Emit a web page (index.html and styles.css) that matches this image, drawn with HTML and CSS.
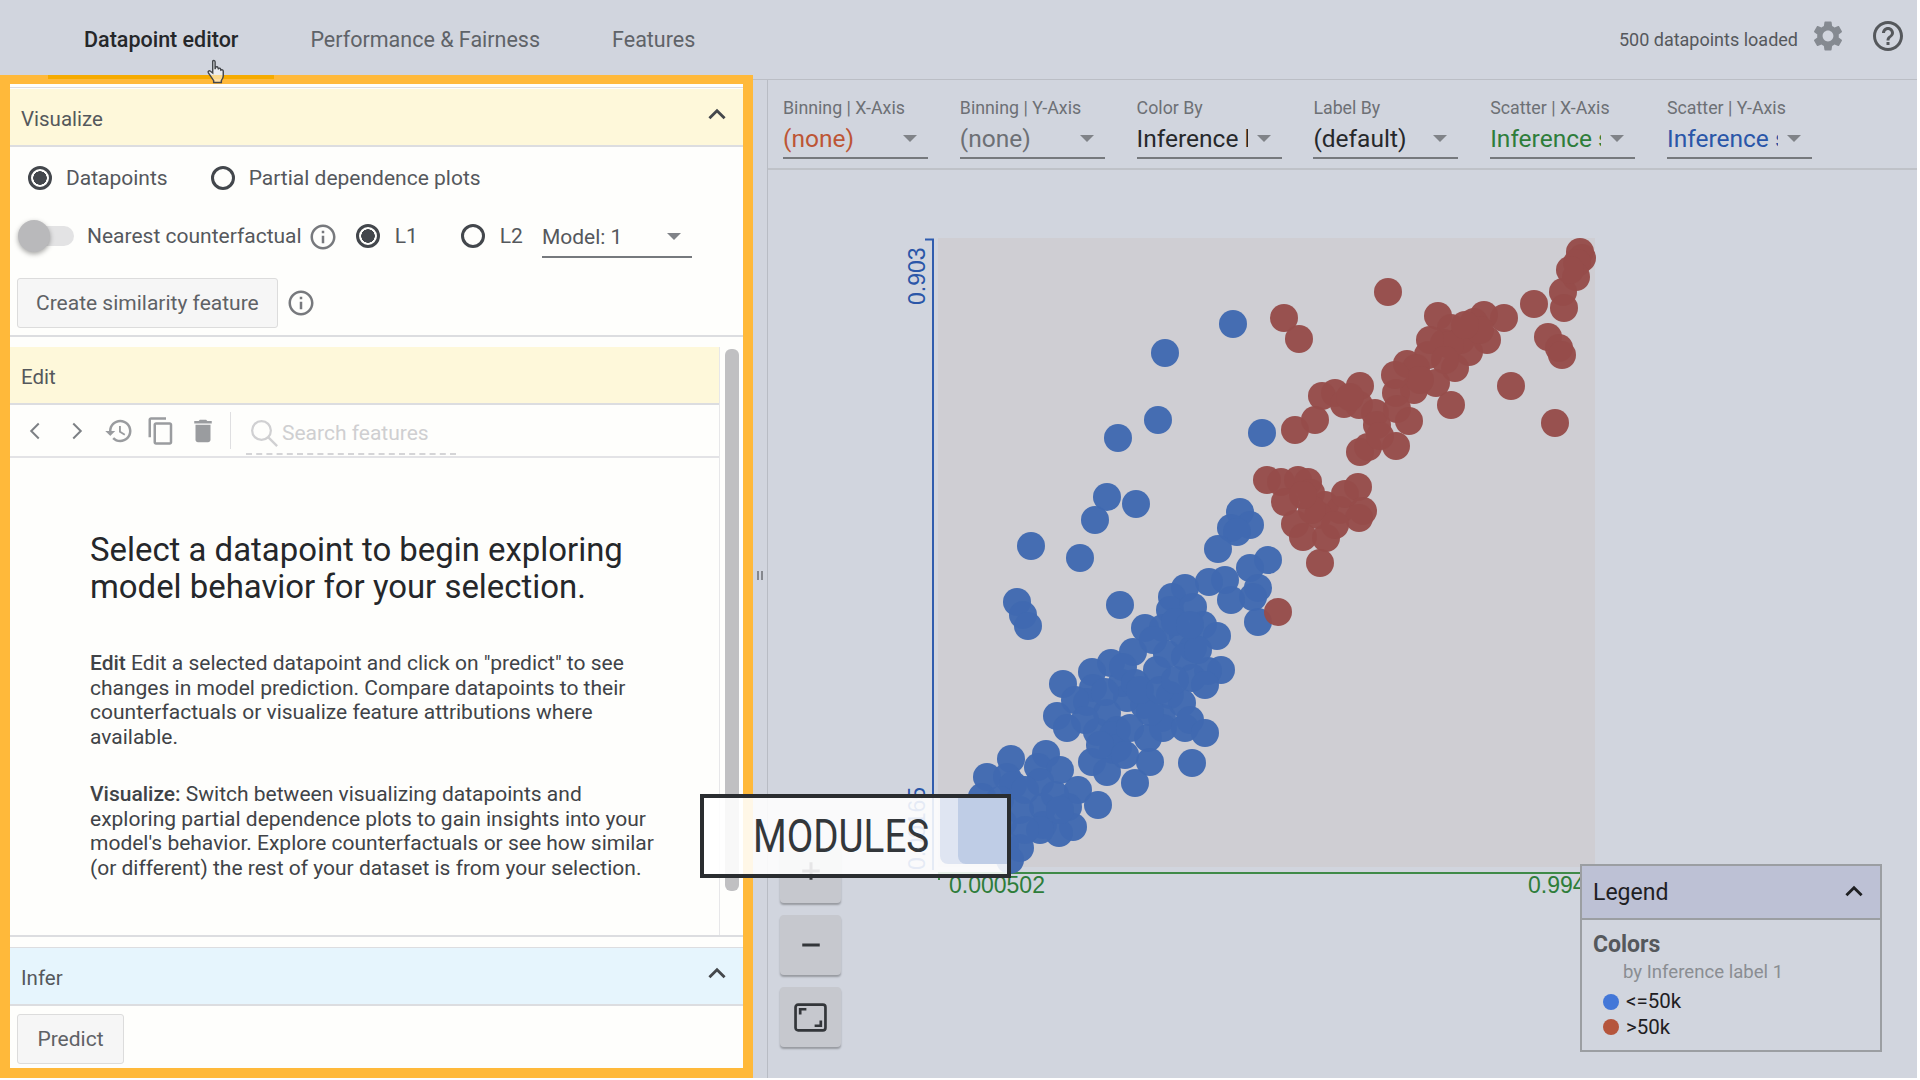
FILE: index.html
```html
<!DOCTYPE html>
<html lang="en">
<head>
  <meta charset="UTF-8" />
  <title>What-If Tool</title>
  <link rel="stylesheet" href="styles.css">
</head>
<body>
<div class="app">

  <header class="topbar">
    <nav class="tabs">
      <div class="tab active">Datapoint editor</div>
      <div class="tab">Performance &amp; Fairness</div>
      <div class="tab">Features</div>
    </nav>
    <div class="status">
      <span>500 datapoints loaded</span>
      <svg class="gear" viewBox="0 0 24 24"><path d="M19.14 12.94c.04-.3.06-.61.06-.94 0-.32-.02-.64-.07-.94l2.03-1.58c.18-.14.23-.41.12-.61l-1.92-3.32c-.12-.22-.37-.29-.59-.22l-2.39.96c-.5-.38-1.03-.7-1.62-.94l-.36-2.54c-.04-.24-.24-.41-.48-.41h-3.84c-.24 0-.43.17-.47.41l-.36 2.54c-.59.24-1.13.57-1.62.94l-2.39-.96c-.22-.08-.47 0-.59.22L2.74 8.87c-.12.21-.08.47.12.61l2.03 1.58c-.05.3-.09.63-.09.94s.02.64.07.94l-2.03 1.58c-.18.14-.23.41-.12.61l1.92 3.32c.12.22.37.29.59.22l2.39-.96c.5.38 1.03.7 1.62.94l.36 2.54c.05.24.24.41.48.41h3.84c.24 0 .44-.17.47-.41l.36-2.54c.59-.24 1.13-.56 1.62-.94l2.39.96c.22.08.47 0 .59-.22l1.92-3.32c.12-.22.07-.47-.12-.61l-2.01-1.58zM12 15.6c-1.98 0-3.6-1.62-3.6-3.6s1.62-3.6 3.6-3.6 3.6 1.62 3.6 3.6-1.62 3.6-3.6 3.6z"/></svg>
      <svg class="help" viewBox="0 0 24 24"><path d="M11 18h2v-2h-2v2zm1-16C6.48 2 2 6.48 2 12s4.48 10 10 10 10-4.48 10-10S17.52 2 12 2zm0 18c-4.41 0-8-3.59-8-8s3.59-8 8-8 8 3.59 8 8-3.59 8-8 8zm0-14c-2.21 0-4 1.79-4 4h2c0-1.1.9-2 2-2s2 .9 2 2c0 2-3 1.75-3 5h2c0-2.25 3-2.5 3-5 0-2.21-1.79-4-4-4z"/></svg>
    </div>
  </header>

  <div class="main">
    <aside class="panel">

      <section class="visualize">
        <div class="sec-head yellow">
          <span>Visualize</span>
          <svg class="chev" viewBox="0 0 24 24"><path d="M5 16l7-7 7 7" /></svg>
        </div>
        <div class="row row-radios">
          <label class="radio on">Datapoints</label>
          <label class="radio">Partial dependence plots</label>
        </div>
        <div class="row row-nearest">
          <div class="toggle"></div>
          <span class="nearest">Nearest counterfactual</span>
          <svg class="info" viewBox="0 0 24 24"><path d="M11 17h2v-6h-2v6zm1-15C6.48 2 2 6.48 2 12s4.48 10 10 10 10-4.48 10-10S17.52 2 12 2zm0 18c-4.41 0-8-3.59-8-8s3.59-8 8-8 8 3.59 8 8-3.59 8-8 8zM11 9h2V7h-2v2z"/></svg>
          <label class="radio on l1">L1</label>
          <label class="radio l2">L2</label>
          <div class="model"><span>Model: 1</span><i class="arrow"></i></div>
        </div>
        <div class="row row-similar">
          <button class="btn">Create similarity feature</button>
          <svg class="info" viewBox="0 0 24 24"><path d="M11 17h2v-6h-2v6zm1-15C6.48 2 2 6.48 2 12s4.48 10 10 10 10-4.48 10-10S17.52 2 12 2zm0 18c-4.41 0-8-3.59-8-8s3.59-8 8-8 8 3.59 8 8-3.59 8-8 8zM11 9h2V7h-2v2z"/></svg>
        </div>
      </section>

      <section class="edit">
        <div class="edit-col">
          <div class="sec-head yellow"><span>Edit</span></div>
          <div class="toolbar">
            <svg class="tool thin" viewBox="0 0 24 24"><path d="M15 6l-6 6 6 6"/></svg>
            <svg class="tool thin" viewBox="0 0 24 24"><path d="M9 6l6 6-6 6"/></svg>
            <svg class="tool" viewBox="0 0 24 24"><path d="M13 3c-4.97 0-9 4.03-9 9H1l3.89 3.89.07.14L9 12H6c0-3.87 3.13-7 7-7s7 3.13 7 7-3.13 7-7 7c-1.93 0-3.68-.79-4.94-2.06l-1.42 1.42C8.27 19.99 10.51 21 13 21c4.97 0 9-4.03 9-9s-4.03-9-9-9zm-1 5v5l4.28 2.54.72-1.21-3.5-2.08V8H12z"/></svg>
            <svg class="tool" viewBox="0 0 24 24"><path d="M16 1H4c-1.1 0-2 .9-2 2v14h2V3h12V1zm3 4H8c-1.1 0-2 .9-2 2v14c0 1.1.9 2 2 2h11c1.1 0 2-.9 2-2V7c0-1.1-.9-2-2-2zm0 16H8V7h11v14z"/></svg>
            <svg class="tool" viewBox="0 0 24 24"><path d="M6 19c0 1.1.9 2 2 2h8c1.1 0 2-.9 2-2V7H6v12zM19 4h-3.5l-1-1h-5l-1 1H5v2h14V4z"/></svg>
            <div class="tool-sep"></div>
            <div class="search">
              <svg class="search-icon" viewBox="0 0 24 24"><circle cx="10" cy="10" r="7.5"/><path d="M15.5 15.500l7 7"/></svg>
              <span>Search features</span>
            </div>
          </div>
          <div class="intro">
            <h1>Select a datapoint to begin exploring model behavior for your selection.</h1>
            <p><b>Edit</b> Edit a selected datapoint and click on "predict" to see changes in model prediction. Compare datapoints to their counterfactuals or visualize feature attributions where available.</p>
            <p><b>Visualize:</b> Switch between visualizing datapoints and exploring partial dependence plots to gain insights into your model's behavior. Explore counterfactuals or see how similar (or different) the rest of your dataset is from your selection.</p>
          </div>
        </div>
        <div class="scrollbar"><div class="thumb"></div></div>
      </section>

      <section class="infer">
        <div class="sec-head blue">
          <span>Infer</span>
          <svg class="chev" viewBox="0 0 24 24"><path d="M5 16l7-7 7 7" /></svg>
        </div>
        <div class="row row-predict"><button class="btn">Predict</button></div>
      </section>
    </aside>

    <div class="handle"><i></i><i></i></div>

    <div class="viz">
      <div class="controls">
        <div class="dd"><label>Binning | X-Axis</label><div class="dd-val c-red"><span>(none)</span><i class="arrow"></i></div></div>
        <div class="dd"><label>Binning | Y-Axis</label><div class="dd-val c-grey"><span>(none)</span><i class="arrow"></i></div></div>
        <div class="dd"><label>Color By</label><div class="dd-val"><span>Inference label 1</span><i class="arrow"></i></div></div>
        <div class="dd"><label>Label By</label><div class="dd-val"><span>(default)</span><i class="arrow"></i></div></div>
        <div class="dd"><label>Scatter | X-Axis</label><div class="dd-val c-green"><span>Inference score 1</span><i class="arrow"></i></div></div>
        <div class="dd"><label>Scatter | Y-Axis</label><div class="dd-val c-blue"><span>Inference score 1</span><i class="arrow"></i></div></div>
      </div>

      <div class="stage">
        <svg class="plot" viewBox="768 170 1149 908">
          <rect class="plot-bg" x="938" y="238" width="657" height="629"/>
          <path class="axis-y" d="M925 239.500H933V870"/>
          <path class="axis-x" d="M939 880V873H1590"/>
          <text class="lbl-y" transform="translate(925 305) rotate(-90)">0.903</text>
          <text class="lbl-y" transform="translate(925 870) rotate(-90)">0.00165</text>
          <text class="lbl-x" x="949" y="893">0.000502</text>
          <text class="lbl-x" x="1528" y="893">0.994</text>
          <g class="dots dots-blue">
            <circle cx="1233" cy="324"/><circle cx="1165" cy="353"/><circle cx="1158" cy="420"/><circle cx="1118" cy="438"/><circle cx="1262" cy="433"/>
            <circle cx="1107" cy="497"/><circle cx="1136" cy="504"/><circle cx="1095" cy="520"/><circle cx="1031" cy="546"/><circle cx="1080" cy="558"/>
            <circle cx="1240" cy="512"/><circle cx="1250" cy="525"/><circle cx="1231" cy="528"/><circle cx="1237" cy="532"/><circle cx="1218" cy="549"/>
            <circle cx="1268" cy="560"/><circle cx="1250" cy="568"/><circle cx="1017" cy="602"/><circle cx="1023" cy="615"/><circle cx="1028" cy="626"/>
            <circle cx="1120" cy="605"/><circle cx="1258" cy="588"/><circle cx="1258" cy="622"/><circle cx="1253" cy="597"/><circle cx="1231" cy="600"/>
            <circle cx="1225" cy="580"/><circle cx="1209" cy="582"/><circle cx="1185" cy="588"/><circle cx="1172" cy="597"/><circle cx="1170" cy="610"/>
            <circle cx="1193" cy="607"/><circle cx="1203" cy="625"/><circle cx="1217" cy="636"/><circle cx="1183" cy="635"/><circle cx="1193" cy="648"/>
            <circle cx="1145" cy="628"/><circle cx="1163" cy="628"/><circle cx="1133" cy="652"/><circle cx="1167" cy="654"/><circle cx="1157" cy="670"/>
            <circle cx="1185" cy="657"/><circle cx="1221" cy="670"/><circle cx="1208" cy="671"/><circle cx="1192" cy="678"/><circle cx="1205" cy="685"/>
            <circle cx="1170" cy="695"/><circle cx="1182" cy="703"/><circle cx="1144" cy="705"/><circle cx="1127" cy="698"/><circle cx="1122" cy="683"/>
            <circle cx="1111" cy="663"/><circle cx="1123" cy="667"/><circle cx="1135" cy="683"/><circle cx="1092" cy="672"/><circle cx="1093" cy="688"/>
            <circle cx="1087" cy="702"/><circle cx="1063" cy="684"/><circle cx="1107" cy="713"/><circle cx="1057" cy="716"/><circle cx="1067" cy="728"/>
            <circle cx="1097" cy="732"/><circle cx="1117" cy="730"/><circle cx="1113" cy="735"/><circle cx="1113" cy="750"/><circle cx="1118" cy="748"/>
            <circle cx="1092" cy="762"/><circle cx="1107" cy="772"/><circle cx="1148" cy="738"/><circle cx="1162" cy="718"/><circle cx="1163" cy="728"/>
            <circle cx="1185" cy="728"/><circle cx="1190" cy="720"/><circle cx="1205" cy="733"/><circle cx="1150" cy="762"/><circle cx="1192" cy="763"/>
            <circle cx="1135" cy="783"/><circle cx="1011" cy="759"/><circle cx="1046" cy="754"/><circle cx="1038" cy="767"/><circle cx="1060" cy="770"/>
            <circle cx="987" cy="777"/><circle cx="1007" cy="777"/><circle cx="1013" cy="785"/><circle cx="1040" cy="782"/><circle cx="1078" cy="790"/>
            <circle cx="1098" cy="805"/><circle cx="1068" cy="807"/><circle cx="1043" cy="807"/><circle cx="1020" cy="810"/><circle cx="1043" cy="825"/>
            <circle cx="1073" cy="827"/><circle cx="1059" cy="833"/><circle cx="1040" cy="830"/><circle cx="1020" cy="848"/><circle cx="982" cy="797"/>
            <circle cx="1000" cy="800"/><circle cx="1003" cy="823"/><circle cx="993" cy="840"/>
            <circle cx="1025" cy="790"/><circle cx="1055" cy="795"/><circle cx="1060" cy="810"/><circle cx="1025" cy="830"/><circle cx="1005" cy="845"/>
            <circle cx="1010" cy="860"/><circle cx="1075" cy="700"/><circle cx="1085" cy="720"/><circle cx="1105" cy="692"/><circle cx="1100" cy="745"/>
            <circle cx="1130" cy="728"/><circle cx="1150" cy="712"/><circle cx="1140" cy="690"/><circle cx="1160" cy="690"/><circle cx="1175" cy="680"/>
            <circle cx="1198" cy="650"/><circle cx="1175" cy="622"/><circle cx="1190" cy="625"/><circle cx="1153" cy="640"/><circle cx="1125" cy="755"/>
          </g>
          <g class="dots dots-red">
            <circle cx="1580" cy="252"/><circle cx="1582" cy="258"/><circle cx="1577" cy="263"/><circle cx="1576" cy="277"/><circle cx="1563" cy="292"/><circle cx="1564" cy="308"/>
            <circle cx="1534" cy="304"/><circle cx="1504" cy="318"/><circle cx="1484" cy="315"/><circle cx="1474" cy="322"/><circle cx="1438" cy="316"/>
            <circle cx="1451" cy="328"/><circle cx="1487" cy="340"/><circle cx="1461" cy="340"/><circle cx="1469" cy="352"/><circle cx="1444" cy="343"/>
            <circle cx="1428" cy="355"/><circle cx="1455" cy="368"/><circle cx="1407" cy="364"/><circle cx="1416" cy="368"/><circle cx="1436" cy="383"/>
            <circle cx="1414" cy="390"/><circle cx="1396" cy="393"/><circle cx="1451" cy="405"/><circle cx="1511" cy="386"/><circle cx="1555" cy="423"/>
            <circle cx="1548" cy="337"/><circle cx="1559" cy="348"/><circle cx="1562" cy="355"/><circle cx="1388" cy="292"/><circle cx="1284" cy="318"/>
            <circle cx="1299" cy="339"/><circle cx="1360" cy="386"/><circle cx="1335" cy="393"/><circle cx="1322" cy="396"/><circle cx="1344" cy="404"/>
            <circle cx="1359" cy="405"/><circle cx="1375" cy="413"/><circle cx="1377" cy="425"/><circle cx="1397" cy="409"/><circle cx="1409" cy="421"/>
            <circle cx="1295" cy="430"/><circle cx="1315" cy="420"/><circle cx="1396" cy="446"/><circle cx="1368" cy="447"/><circle cx="1360" cy="452"/>
            <circle cx="1267" cy="480"/><circle cx="1281" cy="482"/><circle cx="1298" cy="480"/><circle cx="1308" cy="482"/><circle cx="1285" cy="502"/>
            <circle cx="1311" cy="493"/><circle cx="1325" cy="505"/><circle cx="1340" cy="510"/><circle cx="1345" cy="494"/><circle cx="1358" cy="487"/>
            <circle cx="1363" cy="511"/><circle cx="1359" cy="518"/><circle cx="1295" cy="524"/><circle cx="1318" cy="515"/><circle cx="1303" cy="537"/>
            <circle cx="1326" cy="538"/><circle cx="1320" cy="563"/><circle cx="1278" cy="612"/>
            <circle cx="1450" cy="345"/><circle cx="1430" cy="340"/><circle cx="1445" cy="360"/><circle cx="1420" cy="380"/><circle cx="1395" cy="375"/>
            <circle cx="1480" cy="330"/><circle cx="1465" cy="325"/><circle cx="1380" cy="436"/><circle cx="1350" cy="397"/><circle cx="1312" cy="510"/>
            <circle cx="1335" cy="525"/><circle cx="1303" cy="495"/><circle cx="1570" cy="270"/>
          </g>
        </svg>

        <div class="zoom-btns">
          <div class="zoom-btn plus"><svg viewBox="0 0 24 24"><path d="M12 5v14M5 12h14"/></svg></div>
          <div class="zoom-btn tall"><svg viewBox="0 0 24 24"><path d="M5 12h14"/></svg></div>
          <div class="zoom-btn tall"><svg class="fit" viewBox="0 0 32 28"><rect x="1.500" y="1.500" width="29" height="25" rx="2.500"/><path d="M6 11V6h6M26 17v5h-6"/></svg></div>
        </div>

        <div class="legend">
          <div class="legend-head">
            <span>Legend</span>
            <svg class="legend-chev" viewBox="0 0 24 24"><path d="M5 16l7-7 7 7" /></svg>
          </div>
          <div class="legend-body">
            <div class="legend-title">Colors</div>
            <div class="legend-sub">by Inference label 1</div>
            <div class="legend-item"><i class="swatch swatch-blue"></i>&lt;=50k</div>
            <div class="legend-item"><i class="swatch swatch-red"></i>&gt;50k</div>
          </div>
        </div>
      </div>
    </div>
  </div>

  <!-- video caption and pointer lying over the screen recording -->
  <div class="caption">
    <div class="caption-blur"></div>
    <span>MODULES</span>
  </div>
  <svg class="cursor" viewBox="0 0 24 28">
    <path d="M7 2.500c1-1 2.500-.5 2.500 1V11l.5-2c1-1 2.500-.5 2.500.8l.3.7c1-1 2.300-.5 2.500.7l.2.800c1-.8 2.500-.3 2.500 1.200v5c0 2-1 3.500-2 4.800v2H8v-2L2.500 15c-1-1.500.8-3 2.200-1.800L7 15z"/>
  </svg>
</div>
</body>
</html>
```

FILE: styles.css
```css
*, *::before { box-sizing: border-box; }

body {
  margin: 0;
  background: #fff;
  font-family: Roboto, "Noto Sans", sans-serif;
  overflow: hidden;
}

.app {
  position: relative;
  width: 1917px;
  height: 1078px;
  background: #d1d5de;
  display: flex;
  flex-direction: column;
  overflow: hidden;
}

/* top bar */
.topbar {
  height: 80px;
  flex: none;
  display: flex;
  justify-content: space-between;
  padding-left: 48px;
  border-bottom: 1px solid #bbbec5;
}
.tabs { display: flex; }
.tab {
  padding: 0 36px 2px;
  height: 79px;
  line-height: 79px;
  font-size: 21.500px;
  color: #5f6368;
}
.tab.active {
  position: relative;
  z-index: 3;
  font-weight: 500;
  color: #25272a;
  border-bottom: 4px solid #f6ab00;
}
.status {
  display: flex;
  align-items: center;
  height: 72px;
  font-size: 18px;
  color: #55585c;
}
.status span { margin-top: 7px; }
.gear { width: 36px; height: 36px; fill: #858a91; margin-left: 12px; }
.help { width: 36px; height: 36px; fill: #55585c; margin: 0 11px 0 24px; }

.main { flex: 1; display: flex; min-height: 0; }

/* left panel */
.panel {
  width: 753px;
  margin-top: -5px;
  position: relative;
  z-index: 2;
  flex: none;
  display: flex;
  flex-direction: column;
  background: #fefefc;
  border: 10px solid #ffb93a;
  border-top-width: 9px;
  color: #55585c;
  font-size: 21px;
}
.visualize { margin-top: 3px; border-top: 1px solid #dcdde0; height: 250px; border-bottom: 2px solid #dcdde0; padding-top: 1px; }
.sec-head {
  height: 58px;
  padding: 3px 13px 0 11px;
  display: flex;
  justify-content: space-between;
  align-items: center;
  font-size: 20.500px;
  border-bottom: 2px solid #dcdde0;
  color: #55585c;
}
.yellow { background: #fef8da; }
.blue { background: #e6f5fd; }
.chev { width: 26px; height: 26px; fill: none; stroke: #45484c; stroke-width: 2.600; margin-top: -9px; }

.row { display: flex; align-items: center; }
.row-radios { height: 60px; padding: 2px 0 0 18px; }
.row-nearest { height: 58px; padding-left: 8px; position: relative; }
.row-similar { height: 50px; margin-top: 13px; padding-left: 7px; }

.radio {
  display: flex;
  align-items: center;
  color: #55585c;
}
.radio::before {
  content: "";
  width: 24px;
  height: 24px;
  margin-right: 14px;
  border-radius: 50%;
  border: 3px solid #43474c;
}
.radio.on::before {
  background: radial-gradient(circle, #43474c 0 6.500px, transparent 7px);
}
.row-radios .radio + .radio { margin-left: 43px; }

.toggle {
  position: relative;
  width: 52px;
  height: 20px;
  background: #e3e3e4;
  border-radius: 10px;
  margin-left: 4px;
}
.toggle::before {
  content: "";
  position: absolute;
  left: -4px;
  top: -6px;
  width: 32px;
  height: 32px;
  border-radius: 50%;
  background: #b9b9bb;
  box-shadow: 0 2px 5px rgba(0,0,0,.35);
}
.nearest { margin-left: 13px; margin-top: -1px; }
.info { width: 30px; height: 30px; fill: #77797d; margin-left: 6px; flex: none; }
.row-nearest .info { margin-top: 1px; }
.l1 { margin-left: 18px; }
.l1::before, .l2::before { margin-right: 15px; }
.l2 { margin-left: 43px; }
.model {
  width: 150px;
  height: 40px;
  margin-left: 19px;
  margin-top: 3px;
  display: flex;
  justify-content: space-between;
  align-items: center;
  border-bottom: 2px solid #76797d;
  padding-right: 11px;
  color: #55585c;
}
.arrow {
  flex: none;
  width: 0;
  height: 0;
  border-left: 7.500px solid transparent;
  border-right: 7.500px solid transparent;
  border-top: 7.500px solid #808388;
}

.btn {
  font: inherit;
  color: #5f6266;
  background: #f6f6f6;
  border: 1px solid #dcdcdc;
  border-radius: 3px;
  height: 50px;
  padding: 0 18px;
}
.row-similar .info { margin-left: 8px; }

/* edit section */
.edit {
  margin-top: 10px;
  height: 590px;
  display: flex;
  border-bottom: 2px solid #dcdde0;
  flex: none;
}
.edit-col { width: 709px; flex: none; display: flex; flex-direction: column; }
.toolbar {
  height: 53px;
  flex: none;
  display: flex;
  align-items: center;
  border-bottom: 2px solid #e3e3e6;
  padding-left: 10px;
  gap: 12px;
}
.tool { width: 30px; height: 30px; fill: #9a9c9f; flex: none; }
.tool.thin { fill: none; stroke: #7d8085; stroke-width: 1.600; }
.tool-sep { width: 1px; height: 37px; background: #dfdfe1; }
.search {
  width: 210px;
  height: 49px;
  margin-left: 3px;
  padding: 6px 0 0 3px;
  display: flex;
  align-items: center;
  border-bottom: 2px dashed #d5d5d7;
  color: #cfcfd1;
}
.search-icon { width: 30px; height: 30px; fill: none; stroke: #d0d0d2; stroke-width: 1.800; margin-right: 3px; }
.intro { padding: 73px 52px 0 80px; }
.intro h1 {
  margin: 0 0 46px;
  font-size: 32.900px;
  line-height: 37px;
  font-weight: 400;
  color: #25272a;
}
.intro p { margin: 0 0 33px; font-size: 21px; line-height: 24.500px; color: #404347; }
.intro b { font-weight: 500; }

.scrollbar { flex: 1; border-left: 1px solid #e7e7e9; padding: 2px 4px 0 5px; }
.thumb { height: 542px; background: #c0c0c2; border-radius: 6px; }

/* infer section */
.infer { margin-top: 10px; border-top: 1px solid #dcdde0; }
.row-predict { padding: 8px 0 0 7px; }
.row-predict .btn { width: 107px; padding: 0; }

/* drag handle */
.handle {
  width: 14px;
  flex: none;
  display: flex;
  justify-content: center;
  align-items: center;
  gap: 2px;
  padding-bottom: 8px;
}
.handle i { width: 2px; height: 9px; background: #85888e; }

/* right side */
.viz {
  flex: 1;
  display: flex;
  flex-direction: column;
  border-left: 1px solid #b8bcc4;
  min-width: 0;
}
.controls {
  height: 90px;
  flex: none;
  display: flex;
  gap: 31.800px;
  padding: 17px 0 0 15px;
  border-bottom: 2px solid #bfc2c8;
}
.dd { width: 145px; }
.dd label { display: block; font-size: 17.800px; line-height: 22px; color: #6d7075; }
.dd-val {
  height: 40px;
  display: flex;
  align-items: center;
  justify-content: space-between;
  padding-right: 11px;
  border-bottom: 2px solid #76797d;
  font-size: 24.500px;
  color: #26282b;
}
.dd-val span { width: 111px; overflow: hidden; white-space: nowrap; }
.c-red { color: #bd5535; }
.c-grey { color: #6d7075; }
.c-green { color: #2e7d3a; }
.c-blue { color: #2a56a8; }

.stage { position: relative; flex: 1; }
.plot { display: block; width: 1149px; height: 908px; position: absolute; left: 0; top: 0; }
.plot-bg { fill: #cfced3; }
.axis-y { fill: none; stroke: #2f5cae; stroke-width: 2; }
.axis-x { fill: none; stroke: #3f8a48; stroke-width: 2; }
.plot text { font-family: "Liberation Sans", sans-serif; font-size: 23px; }
.lbl-y { fill: #2a56a8; }
.lbl-x { fill: #2e7d3a; }
.dots circle { r: 14px; }
.dots-blue circle { fill: #4069b1; fill-opacity: .97; }
.dots-red circle { fill: #964c4a; fill-opacity: .97; }

.zoom-btns {
  position: absolute;
  left: 12px;
  bottom: 31px;
  display: flex;
  flex-direction: column;
  gap: 12px;
}
.zoom-btn {
  width: 61px;
  height: 56px;
  background: #c6c8ce;
  border-radius: 4px;
  box-shadow: 0 2px 2px rgba(0,0,0,.28);
  display: flex;
  align-items: center;
  justify-content: center;
}
.zoom-btn.plus { padding-bottom: 8px; }
.zoom-btn.tall { height: 60px; }
.zoom-btn svg { width: 30px; height: 30px; fill: none; stroke: #33363a; stroke-width: 2.400; }
.zoom-btn .fit { width: 33px; height: 29px; stroke-width: 2.600; }

.legend {
  position: absolute;
  right: 35px;
  bottom: 26px;
  width: 302px;
  height: 188px;
  background: #d1d5de;
  border: 2px solid #9b9ea2;
}
.legend-head {
  height: 54px;
  padding: 0 13px 0 11px;
  display: flex;
  justify-content: space-between;
  align-items: center;
  background: #bdc1d5;
  border-bottom: 2px solid #9b9ea2;
  font-size: 23px;
  color: #1f2023;
}
.legend-chev { width: 26px; height: 26px; fill: none; stroke: #1f2023; stroke-width: 2.600; margin-top: -2px; }
.legend-body { padding: 11px 11px; }
.legend-title { font-size: 23px; line-height: 28px; font-weight: 700; color: #55585c; }
.legend-sub { font-size: 18.600px; line-height: 24px; margin: 1px 0 5px 30px; color: #8a8d92; }
.legend-item { display: flex; align-items: center; font-size: 20.500px; line-height: 25.500px; color: #1f2023; padding-left: 10px; }
.swatch { width: 16px; height: 16px; border-radius: 50%; margin-right: 7px; }
.swatch-blue { background: #4377d8; }
.swatch-red { background: #b5553c; }

/* overlays */
.caption {
  position: absolute;
  left: 700px;
  top: 794px;
  width: 311px;
  height: 84px;
  z-index: 5;
  border: 4px solid #2a2d30;
  background: rgba(255,255,255,.88);
  display: flex;
  align-items: center;
  padding-left: 49px;
  overflow: hidden;
}
.caption span {
  position: relative;
  font-size: 46.500px;
  color: #33373b;
  transform: scaleX(.83);
  transform-origin: left center;
}
.caption-blur {
  position: absolute;
  left: 254px;
  top: 0;
  width: 53px;
  height: 66px;
  background: #bfcde6;
  border-radius: 0 0 0 8px;
  box-shadow: -18px 0 0 #dfe5f2;
}
.cursor {
  position: absolute;
  left: 206px;
  top: 58px;
  width: 23px;
  height: 28px;
  z-index: 6;
  fill: rgba(255,255,255,.55);
  stroke: #44474b;
  stroke-width: 1.500;
}
```
